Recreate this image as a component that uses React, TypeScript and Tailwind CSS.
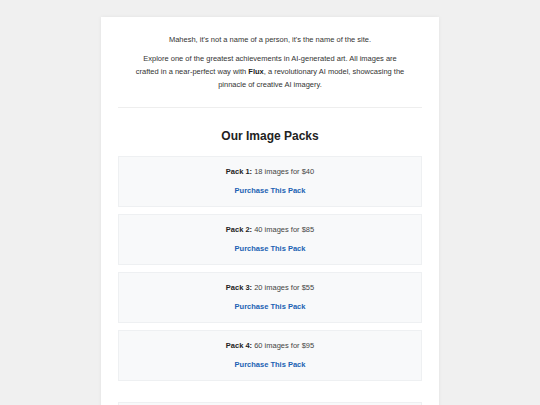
const packs = [
  { n: 1, count: 18, price: 40 },
  { n: 2, count: 40, price: 85 },
  { n: 3, count: 20, price: 55 },
  { n: 4, count: 60, price: 95 },
];

export default function App() {
  return (
    <div className="h-[405px] overflow-hidden bg-[#f0f0f0] pt-[17px] font-['Liberation_Sans',Arial,sans-serif] text-[#333]">
      <div className="mx-auto w-[338px] bg-white px-[17px] pt-[16px] pb-[17px] shadow-[0_0_4px_rgba(0,0,0,0.06)]">
        <div className="text-center text-[7.5px] leading-[13px]">
          <p>Mahesh, it's not a name of a person, it's the name of the site.</p>
          <p className="mx-auto mt-[6px] max-w-[272px]">
            Explore one of the greatest achievements in AI-generated art. All images are crafted in a
            near-perfect way with <strong className="text-[#222]">Flux</strong>, a revolutionary AI
            model, showcasing the pinnacle of creative AI imagery.
          </p>
        </div>
        <hr className="mt-[16px] border-t border-[#eeeeee]" />
        <h2 className="mt-[18px] text-center text-[12px] font-bold leading-[20px] text-[#222]">
          Our Image Packs
        </h2>
        <div className="mt-[10px] flex flex-col gap-[7px]">
          {packs.map((p) => (
            <div
              key={p.n}
              className="flex h-[51px] flex-col items-center justify-center gap-[9px] border border-[#eef0f2] bg-[#f8f9fa] text-[7.5px] leading-[10px]"
            >
              <div className="text-[#444]">
                <span className="font-bold text-[#222]">Pack {p.n}:</span> {p.count} images for ${p.price}
              </div>
              <a href="#" className="font-bold text-[#1a62b3]">
                Purchase This Pack
              </a>
            </div>
          ))}
        </div>
        <div className="mt-[21px] h-[20px] border border-[#eef0f2] bg-[#f8f9fa]" />
      </div>
    </div>
  );
}
